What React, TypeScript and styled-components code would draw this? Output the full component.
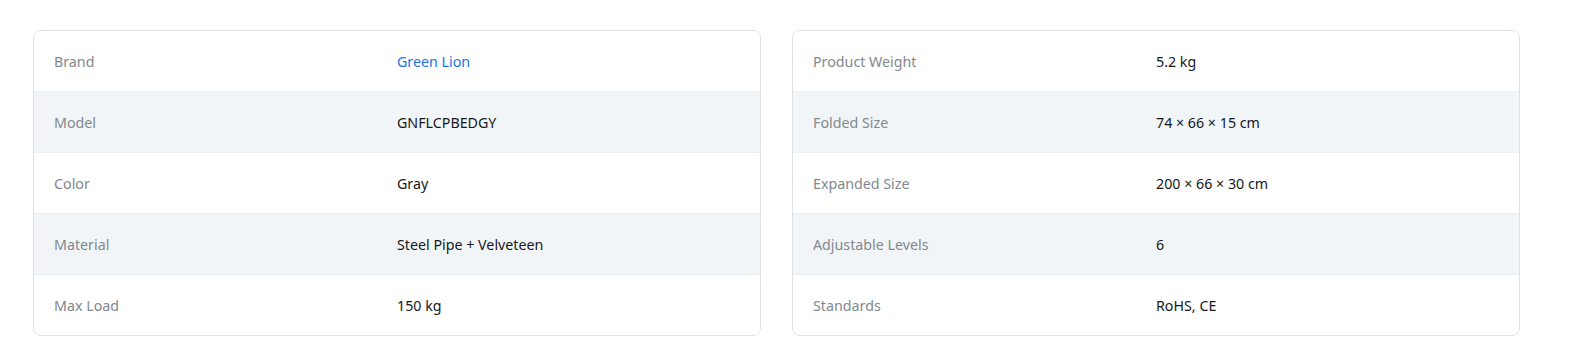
import styled, { createGlobalStyle } from "styled-components";

const GlobalStyle = createGlobalStyle`
  body {
    margin: 0;
    background: #ffffff;
    font-family: "Noto Sans", "Open Sans", sans-serif;
  }
`;

const Page = styled.div`
  display: grid;
  grid-template-columns: 1fr 1fr;
  gap: 31px;
  width: 1487px;
  padding: 30px 0 0 33px;
  box-sizing: content-box;
`;

const Card = styled.div`
  border: 1px solid #dde1e6;
  border-radius: 8px;
  overflow: hidden;
  background: #ffffff;
`;

const Row = styled.div<{ striped: boolean }>`
  display: grid;
  grid-template-columns: 1fr 1fr;
  align-items: center;
  height: 60px;
  padding: 0 20px;
  background: ${props => (props.striped ? "#f2f5f8" : "#ffffff")};
  border-bottom: 1px solid #edf0f3;
  &:last-child {
    border-bottom: none;
  }
`;

const Label = styled.span`
  font-size: 14.25px;
  color: #82888f;
`;

const Value = styled.span<{ link?: boolean }>`
  font-size: 14.25px;
  color: ${props => (props.link ? "#1a73e8" : "#16181c")};
`;

type Spec = { label: string; value: string; link?: boolean };

const left: Spec[] = [
  { label: "Brand", value: "Green Lion", link: true },
  { label: "Model", value: "GNFLCPBEDGY" },
  { label: "Color", value: "Gray" },
  { label: "Material", value: "Steel Pipe + Velveteen" },
  { label: "Max Load", value: "150 kg" },
];

const right: Spec[] = [
  { label: "Product Weight", value: "5.2 kg" },
  { label: "Folded Size", value: "74 × 66 × 15 cm" },
  { label: "Expanded Size", value: "200 × 66 × 30 cm" },
  { label: "Adjustable Levels", value: "6" },
  { label: "Standards", value: "RoHS, CE" },
];

const SpecTable = ({ specs }: { specs: Spec[] }) => (
  <Card>
    {specs.map((s, i) => (
      <Row key={s.label} striped={i % 2 === 1}>
        <Label>{s.label}</Label>
        <Value link={s.link}>{s.value}</Value>
      </Row>
    ))}
  </Card>
);

export default function App() {
  return (
    <>
      <GlobalStyle />
      <Page>
        <SpecTable specs={left} />
        <SpecTable specs={right} />
      </Page>
    </>
  );
}
